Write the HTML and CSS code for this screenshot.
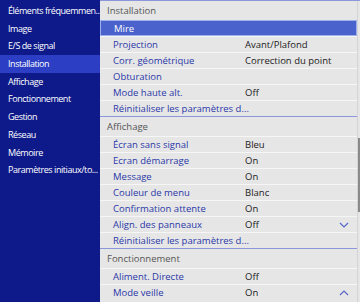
FILE: index.html
```html
<!doctype html>
<html lang="fr">
<head>
  <meta charset="UTF-8">
  <title>Menu</title>
  <link rel="stylesheet" href="styles.css">
</head>
<body>
  <div class="menu">
    <ul class="side">
      <li>Éléments fréquemmen...</li>
      <li>Image</li>
      <li>E/S de signal</li>
      <li class="on">Installation</li>
      <li>Affichage</li>
      <li>Fonctionnement</li>
      <li>Gestion</li>
      <li>Réseau</li>
      <li>Mémoire</li>
      <li>Paramètres initiaux/to...</li>
    </ul>
    <div class="main">
      <div class="list">
        <div class="group">
          <div class="head">Installation</div>
          <div class="row sel"><span class="name">Mire</span><span class="val"></span></div>
          <div class="row"><span class="name">Projection</span><span class="val">Avant/Plafond</span></div>
          <div class="row"><span class="name">Corr. géométrique</span><span class="val">Correction du point</span></div>
          <div class="row"><span class="name">Obturation</span><span class="val"></span></div>
          <div class="row"><span class="name">Mode haute alt.</span><span class="val">Off</span></div>
          <div class="row"><span class="name">Réinitialiser les paramètres d...</span></div>
        </div>
        <div class="group">
          <div class="head">Affichage</div>
          <div class="row"><span class="name">Écran sans signal</span><span class="val">Bleu</span></div>
          <div class="row"><span class="name">Ecran démarrage</span><span class="val">On</span></div>
          <div class="row"><span class="name">Message</span><span class="val">On</span></div>
          <div class="row"><span class="name">Couleur de menu</span><span class="val">Blanc</span></div>
          <div class="row"><span class="name">Confirmation attente</span><span class="val">On</span></div>
          <div class="row"><span class="name">Align. des panneaux</span><span class="val">Off</span>
            <svg class="chev" width="10" height="6" viewBox="0 0 10 6"><path d="M1 1 L5 5 L9 1" fill="none" stroke="#5866c8" stroke-width="1.2"/></svg>
          </div>
          <div class="row"><span class="name">Réinitialiser les paramètres d...</span></div>
        </div>
        <div class="group">
          <div class="head">Fonctionnement</div>
          <div class="row"><span class="name">Aliment. Directe</span><span class="val">Off</span></div>
          <div class="row"><span class="name">Mode veille</span><span class="val">On</span>
            <svg class="chev" width="10" height="6" viewBox="0 0 10 6"><path d="M1 5 L5 1 L9 5" fill="none" stroke="#5866c8" stroke-width="1.2"/></svg>
          </div>
        </div>
      </div>
      <div class="track"><div class="thumb"></div></div>
    </div>
  </div>
</body>
</html>
```

FILE: styles.css
```css
* { margin: 0; padding: 0; list-style: none; box-sizing: border-box; }
body { width: 360px; height: 302px; overflow: hidden; font-family: "Open Sans", "Noto Sans", sans-serif; font-size: 9.5px; }
.menu { display: flex; height: 302px; }

.side { width: 100px; background: #0e1a8a; padding-top: 2px; flex-shrink: 0; }
.side li { height: 17.7px; line-height: 17.7px; padding-left: 8px; color: #fff; white-space: nowrap;
           font-size: 9px; letter-spacing: -0.45px; }
.side .on { background: #2c3fc4; }

.main { flex: 1; display: flex; background: #e6e6e6; border-top: 1px solid #8c96d8; }
.list { flex: 1; }
.group { border-bottom: 1px solid #8c96d8; }
.group:last-child { border-bottom: none; }
.head { height: 19px; line-height: 19px; padding-left: 7px; color: #555; }
.row { height: 16px; display: flex; align-items: center; padding-left: 13px; color: #2a38a8;
       border-top: 1px solid #f6f6f6; position: relative; }
.row .name { width: 132px; flex-shrink: 0; white-space: nowrap; }
.row .val { color: #222; }
.row.sel { background: #4a62cb; color: #fff; border: 1px solid #9fb0ee; }
.chev { position: absolute; right: 8px; top: 5px; }

.track { width: 3px; background: #e6e6e6; border-left: 1px solid #d4d4d4; }
.thumb { width: 3px; height: 74px; margin-top: 137px; background: #8a8a8a; }
```
